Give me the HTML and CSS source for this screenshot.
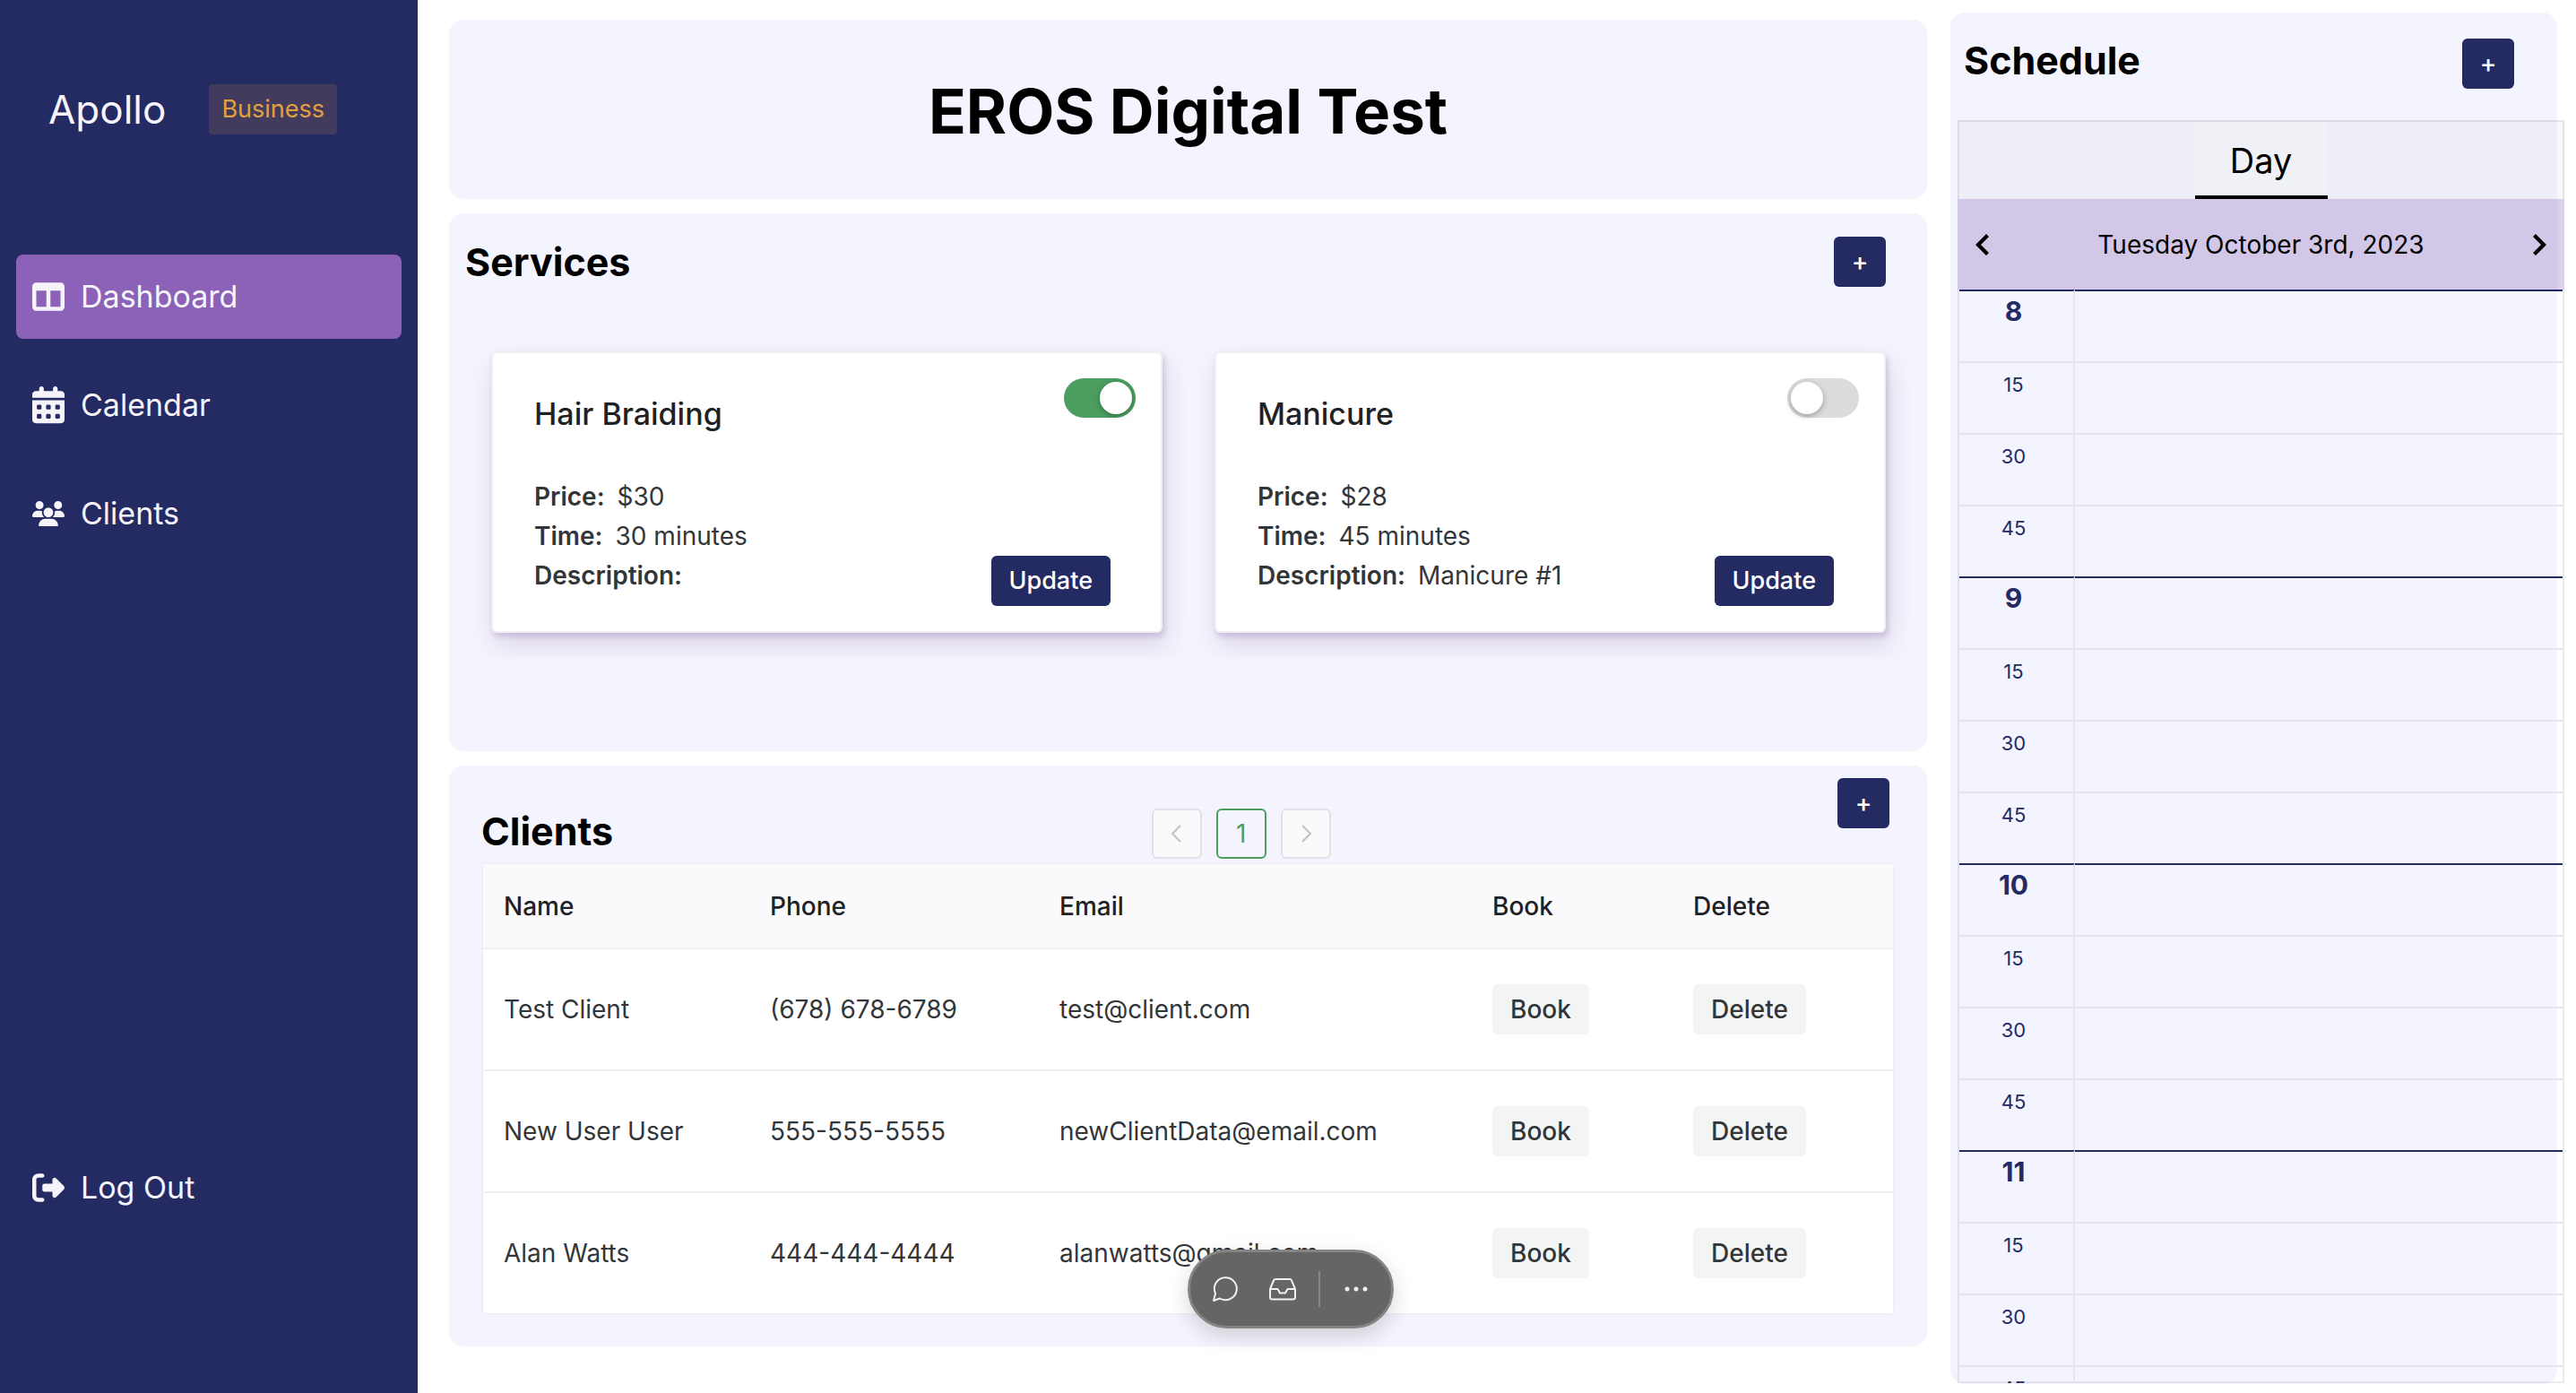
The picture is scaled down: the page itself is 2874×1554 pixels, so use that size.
FILE: index.html
```html
<!DOCTYPE html>
<html lang="en">
<head>
<meta charset="utf-8">
<title>Apollo Dashboard</title>
<link rel="stylesheet" href="styles.css">
</head>
<body>
<div class="app">
  <nav class="sidebar" aria-label="Main">
    <div class="brand">
      <span class="brand-name">Apollo</span>
      <span class="badge">Business</span>
    </div>
    <div class="nav-list">
      <a class="nav-link active" href="#dashboard">
        <svg class="nav-icon" viewBox="0 0 512 512"><path d="M0 96C0 60.7 28.7 32 64 32H448c35.3 0 64 28.7 64 64V416c0 35.3-28.7 64-64 64H64c-35.3 0-64-28.7-64-64V96zm64 64V416H224V160H64zm384 0H288V416H448V160z"/></svg>
        Dashboard
      </a>
      <a class="nav-link" href="#calendar">
        <svg class="nav-icon" viewBox="0 0 448 512"><path d="M128 0c17.700 0 32 14.300 32 32V64H288V32c0-17.700 14.300-32 32-32s32 14.300 32 32V64h48c26.500 0 48 21.500 48 48v48H0V112C0 85.500 21.500 64 48 64H96V32c0-17.700 14.300-32 32-32zM0 192H448V464c0 26.500-21.500 48-48 48H48c-26.500 0-48-21.500-48-48V192zm64 80v32c0 8.800 7.200 16 16 16h32c8.800 0 16-7.200 16-16V272c0-8.800-7.200-16-16-16H80c-8.800 0-16 7.200-16 16zm128 0v32c0 8.800 7.200 16 16 16h32c8.800 0 16-7.200 16-16V272c0-8.800-7.200-16-16-16H208c-8.800 0-16 7.200-16 16zm144-16c-8.800 0-16 7.200-16 16v32c0 8.800 7.200 16 16 16h32c8.800 0 16-7.200 16-16V272c0-8.800-7.200-16-16-16H336zM64 400v32c0 8.800 7.200 16 16 16h32c8.800 0 16-7.200 16-16V400c0-8.800-7.200-16-16-16H80c-8.800 0-16 7.200-16 16zm144-16c-8.800 0-16 7.200-16 16v32c0 8.800 7.200 16 16 16h32c8.800 0 16-7.200 16-16V400c0-8.800-7.200-16-16-16H208zm112 16v32c0 8.800 7.200 16 16 16h32c8.800 0 16-7.200 16-16V400c0-8.800-7.200-16-16-16H336c-8.800 0-16 7.200-16 16z"/></svg>
        Calendar
      </a>
      <a class="nav-link" href="#clients">
        <svg class="nav-icon" viewBox="0 0 640 512"><path d="M144 0a80 80 0 1 1 0 160A80 80 0 1 1 144 0zM512 0a80 80 0 1 1 0 160A80 80 0 1 1 512 0zM0 298.700C0 239.800 47.800 192 106.700 192h42.700c15.900 0 31 3.500 44.600 9.700c-1.300 7.200-1.900 14.700-1.900 22.300c0 38.200 16.800 72.500 43.300 96c-.2 0-.4 0-.7 0H21.300C9.600 320 0 310.400 0 298.700zM405.300 320c-.2 0-.4 0-.7 0c26.600-23.500 43.300-57.800 43.300-96c0-7.600-.7-15-1.900-22.300c13.600-6.300 28.700-9.700 44.600-9.700h42.700C592.200 192 640 239.800 640 298.700c0 11.800-9.600 21.300-21.300 21.300H405.300zM224 224a96 96 0 1 1 192 0 96 96 0 1 1-192 0zM128 485.300C128 411.700 187.700 352 261.300 352H378.700C452.300 352 512 411.700 512 485.300c0 14.700-11.900 26.700-26.700 26.700H154.700c-14.700 0-26.700-11.900-26.700-26.700z"/></svg>
        Clients
      </a>
    </div>
    <a class="nav-link logout" href="#logout">
      <svg class="nav-icon" viewBox="0 0 512 512"><path d="M377.900 105.900L500.700 228.700c7.200 7.200 11.300 17.100 11.300 27.300s-4.100 20.100-11.300 27.300L377.900 406.100c-6.400 6.400-15 9.900-24 9.900c-18.700 0-33.900-15.200-33.900-33.900l0-62.100-128 0c-17.700 0-32-14.300-32-32l0-64c0-17.700 14.300-32 32-32l128 0 0-62.100c0-18.700 15.200-33.900 33.900-33.900c9 0 17.600 3.600 24 9.900zM160 96L96 96c-17.700 0-32 14.300-32 32l0 256c0 17.700 14.300 32 32 32l64 0c17.700 0 32 14.300 32 32s-14.300 32-32 32l-64 0c-53 0-96-43-96-96L0 128C0 75 43 32 96 32l64 0c17.700 0 32 14.300 32 32s-14.300 32-32 32z"/></svg>
      Log Out
    </a>
  </nav>

  <main class="main">
    <header class="card title-card"><h1 class="title">EROS Digital Test</h1></header>

    <section class="card services">
      <div class="services-head">
        <h2 class="heading">Services</h2>
        <button class="btn btn-add" type="button" aria-label="Add service">+</button>
      </div>
      <div class="service-list">
        <article class="service">
          <div class="service-top">
            <h3 class="service-name" id="svc-hair">Hair Braiding</h3>
            <input class="switch" type="checkbox" role="switch" aria-labelledby="svc-hair" checked>
          </div>
          <div class="service-bottom">
            <dl class="facts">
              <div class="fact"><dt>Price:</dt><dd>$30</dd></div>
              <div class="fact"><dt>Time:</dt><dd>30 minutes</dd></div>
              <div class="fact"><dt>Description:</dt><dd></dd></div>
            </dl>
            <button class="btn btn-primary" type="button">Update</button>
          </div>
        </article>
        <article class="service">
          <div class="service-top">
            <h3 class="service-name" id="svc-mani">Manicure</h3>
            <input class="switch" type="checkbox" role="switch" aria-labelledby="svc-mani">
          </div>
          <div class="service-bottom">
            <dl class="facts">
              <div class="fact"><dt>Price:</dt><dd>$28</dd></div>
              <div class="fact"><dt>Time:</dt><dd>45 minutes</dd></div>
              <div class="fact"><dt>Description:</dt><dd>Manicure #1</dd></div>
            </dl>
            <button class="btn btn-primary" type="button">Update</button>
          </div>
        </article>
      </div>
    </section>

    <section class="card clients">
      <div class="clients-head">
        <h2 class="heading">Clients</h2>
        <div class="pager">
          <button class="page-btn" type="button" aria-label="Previous page" disabled><svg class="page-icon" viewBox="0 0 28 28"><path d="M18 5L9 14l9 9"/></svg></button>
          <button class="page-btn current" type="button" aria-current="page">1</button>
          <button class="page-btn" type="button" aria-label="Next page" disabled><svg class="page-icon" viewBox="0 0 28 28"><path d="M10 5l9 9-9 9"/></svg></button>
        </div>
        <button class="btn btn-add" type="button" aria-label="Add client">+</button>
      </div>
      <table class="client-table">
        <colgroup><col class="c-name"><col class="c-phone"><col class="c-email"><col class="c-book"><col class="c-delete"></colgroup>
        <thead>
          <tr><th>Name</th><th>Phone</th><th>Email</th><th>Book</th><th>Delete</th></tr>
        </thead>
        <tbody>
          <tr><td>Test Client</td><td>(678) 678-6789</td><td>test@client.com</td><td><button class="btn btn-soft" type="button">Book</button></td><td><button class="btn btn-soft" type="button">Delete</button></td></tr>
          <tr><td>New User User</td><td>555-555-5555</td><td>newClientData@email.com</td><td><button class="btn btn-soft" type="button">Book</button></td><td><button class="btn btn-soft" type="button">Delete</button></td></tr>
          <tr><td>Alan Watts</td><td>444-444-4444</td><td>alanwatts@gmail.com</td><td><button class="btn btn-soft" type="button">Book</button></td><td><button class="btn btn-soft" type="button">Delete</button></td></tr>
        </tbody>
      </table>
    </section>
  </main>

  <aside class="card schedule">
    <div class="schedule-head">
      <h2 class="heading">Schedule</h2>
      <button class="btn btn-add" type="button" aria-label="Add appointment">+</button>
    </div>
    <div class="planner">
      <div class="tabs"><button class="tab" type="button">Day</button></div>
      <div class="date-bar">
        <button class="arrow" type="button" aria-label="Previous day"><svg class="arrow-icon" viewBox="0 0 16 24"><path d="M13 0l3 3-9 9 9 9-3 3L1 12z"/></svg></button>
        <span>Tuesday October 3rd, 2023</span>
        <button class="arrow" type="button" aria-label="Next day"><svg class="arrow-icon" viewBox="0 0 16 24"><path d="M3 0L0 3l9 9-9 9 3 3 12-12z"/></svg></button>
      </div>
      <div class="hours">
        <table class="slots">
          <tbody>
            <tr class="hour"><th>8</th><td></td></tr>
            <tr><th>15</th><td></td></tr>
            <tr><th>30</th><td></td></tr>
            <tr><th>45</th><td></td></tr>
            <tr class="hour"><th>9</th><td></td></tr>
            <tr><th>15</th><td></td></tr>
            <tr><th>30</th><td></td></tr>
            <tr><th>45</th><td></td></tr>
            <tr class="hour"><th>10</th><td></td></tr>
            <tr><th>15</th><td></td></tr>
            <tr><th>30</th><td></td></tr>
            <tr><th>45</th><td></td></tr>
            <tr class="hour"><th>11</th><td></td></tr>
            <tr><th>15</th><td></td></tr>
            <tr><th>30</th><td></td></tr>
            <tr><th>45</th><td></td></tr>
          </tbody>
        </table>
      </div>
    </div>
  </aside>
</div>

<div class="toolbar" role="toolbar" aria-label="Comments">
  <button class="tool" type="button" aria-label="Comment"><svg class="tool-icon" viewBox="0 0 32 32"><path d="M3 29l2-8A12.500 12.500 0 1 1 10 26.500z"/></svg></button>
  <button class="tool inbox" type="button" aria-label="Inbox"><svg class="tool-icon" viewBox="0 0 32 32"><path d="M2 16L6 6.500Q6.600 5 8.200 5H23.800Q25.400 5 26 6.500L30 16V25Q30 27.500 27.500 27.500H4.500Q2 27.500 2 25zH10.500L13 20.500H19L21.500 16H30"/></svg></button>
  <span class="tool-divider"></span>
  <button class="tool" type="button" aria-label="More"><svg class="tool-icon dots" viewBox="0 0 32 32"><circle cx="6" cy="16" r="2.500"/><circle cx="16" cy="16" r="2.500"/><circle cx="26" cy="16" r="2.500"/></svg></button>
</div>
</body>
</html>
```
FILE: styles.css
```css
* { box-sizing: border-box; }

body {
  margin: 0;
  background: #fff;
  color: #333639;
  font-family: Inter, "Liberation Sans", sans-serif;
  font-size: 28px;
  line-height: 44px;
}

h1, h2, h3, dl, dd { margin: 0; }

button {
  border: 0;
  padding: 0;
  background: none;
  color: inherit;
  font: inherit;
}

svg { display: block; }

.app {
  display: grid;
  grid-template-columns: 466px 1fr 677px;
  height: 100vh;
  padding-right: 21px;
}

/* Sidebar */
.sidebar {
  display: flex;
  flex-direction: column;
  padding: 94px 18px 182px;
  background: #242a62;
  color: #f6f3fa;
}

.brand {
  display: flex;
  align-items: center;
  gap: 48px;
  height: 56px;
  padding-left: 36px;
}

.brand-name { font-size: 44px; }

.badge {
  padding: 6px 14px;
  border-radius: 4px;
  background: #433b5e;
  color: #e2a23b;
  font-size: 27px;
}

.nav-list {
  display: flex;
  flex-direction: column;
  gap: 27px;
  margin-top: 134px;
}

.nav-link {
  display: flex;
  align-items: center;
  gap: 18px;
  height: 94px;
  padding: 0 18px;
  border-radius: 8px;
  color: inherit;
  font-size: 34px;
  text-decoration: none;
}

.nav-link.active { background: #8c61b8; }
.nav-icon { width: 36px; fill: currentColor; }
.logout { margin-top: auto; }

/* Panels */
.card {
  border-radius: 16px;
  background: #f3f4fd;
}

.main {
  display: flex;
  flex-direction: column;
  gap: 16px;
  padding: 22px 26px 0 35px;
}

.heading {
  color: #000;
  font-size: 43px;
  font-weight: 700;
  line-height: 56px;
}

.title-card { padding: 58px 0 54px; }

.title {
  color: #000;
  font-size: 69px;
  font-weight: 700;
  line-height: 88px;
  text-align: center;
}

/* Buttons */
.btn {
  height: 56px;
  border-radius: 6px;
  font-weight: 500;
}

.btn-add { width: 58px; }

.btn-add,
.btn-primary {
  background: #242a62;
  color: #fff;
}

.btn-primary,
.btn-soft { padding: 0 20px; }
.btn-primary { font-size: 27px; }
.btn-soft { background: #f3f5f5; }

/* Services */
.services { height: 600px; }

.services-head {
  display: flex;
  justify-content: space-between;
  padding: 26px 46px 0 18px;
}

.service-list {
  display: grid;
  grid-template-columns: 1fr 1fr;
  gap: 58px;
  margin-top: 44px;
  padding: 28px 46px 28px 47px;
  overflow: hidden;
}

.service {
  display: flex;
  flex-direction: column;
  justify-content: space-between;
  height: 314px;
  padding: 28px;
  border: 2px solid #efeff5;
  border-radius: 6px;
  background: #fff;
  box-shadow: 2px 4px 6px rgba(90, 30, 110, 0.18), 4px 14px 28px rgba(90, 30, 110, 0.14);
}

.service-top {
  display: flex;
  justify-content: space-between;
  padding-left: 18px;
}

.service-name {
  padding-top: 18px;
  color: #1f2225;
  font-size: 34px;
  font-weight: 500;
  line-height: 44px;
}

.service-bottom {
  display: flex;
  align-items: flex-end;
  justify-content: space-between;
  padding: 0 28px 0 18px;
}

.facts { padding-bottom: 12px; }

.fact {
  display: flex;
  gap: 14px;
}

dt { font-weight: 600; }

.switch {
  display: flex;
  align-items: center;
  width: 80px;
  height: 44px;
  margin: 0;
  padding: 4px;
  border-radius: 22px;
  background: #dbdbdb;
  appearance: none;
}

.switch::before {
  width: 36px;
  height: 36px;
  border-radius: 50%;
  background: #fff;
  box-shadow: 0 2px 6px rgba(0, 0, 0, 0.3);
  content: "";
}

.switch:checked {
  justify-content: flex-end;
  background: #4b9e5f;
}

/* Clients */
.clients {
  height: 648px;
  padding: 14px 36px 0;
}

.clients-head {
  display: grid;
  grid-template-columns: 6fr auto 5fr;
  height: 94px;
  padding-right: 6px;
}

.clients-head .heading { padding-top: 31px; }
.clients-head .btn-add { justify-self: end; }

.pager {
  display: flex;
  gap: 16px;
  padding-top: 34px;
}

.page-btn {
  display: grid;
  place-items: center;
  width: 56px;
  height: 56px;
  border: 2px solid #e0e0e6;
  border-radius: 6px;
  background: #fafafc;
}

.page-btn.current {
  border-color: #4b9e5f;
  background: none;
  color: #4b9e5f;
}

.page-icon {
  width: 28px;
  fill: none;
  stroke: #c2c2c2;
  stroke-width: 2;
}

.client-table {
  width: 100%;
  border: 2px solid #efeff5;
  border-radius: 6px;
  background: #fff;
  border-spacing: 0;
  table-layout: fixed;
}

.c-name { width: 297px; }
.c-phone { width: 323px; }
.c-book { width: 224px; }
.c-delete { width: 246px; }

.client-table th,
.client-table td {
  padding: 0 23px;
  border-bottom: 2px solid #efeff5;
  text-align: left;
}

.client-table th {
  height: 95px;
  background: #fafafc;
  color: #1f2225;
  font-weight: 500;
}

.client-table td { height: 136px; }

.client-table tbody tr:last-child td {
  height: 134px;
  border-bottom: 0;
}

/* Schedule */
.schedule {
  display: flex;
  flex-direction: column;
  min-height: 0;
  margin: 14px 0 10px;
  padding: 0 0 1px 8px;
}

.schedule-head {
  display: flex;
  align-items: flex-start;
  justify-content: space-between;
  height: 120px;
  padding: 25px 48px 0 7px;
}

.schedule-head .btn-add { margin-top: 4px; }

/* The planner keeps the panel's full width and hangs past its right edge */
.planner {
  display: flex;
  flex: 1;
  flex-direction: column;
  min-height: 0;
  margin-right: -8px;
  color: #000;
}

.tabs {
  display: flex;
  flex-shrink: 0;
  justify-content: center;
  height: 88px;
  border: 2px solid rgba(0, 0, 0, 0.08);
  border-bottom: 0;
  background: rgba(200, 200, 200, 0.12);
}

.tab {
  width: 148px;
  padding-top: 4px;
  border-bottom: 4px solid #000;
  background: rgba(255, 255, 255, 0.2);
  font-size: 38px;
}

.date-bar {
  display: flex;
  flex-shrink: 0;
  align-items: center;
  justify-content: space-between;
  height: 101px;
  padding: 0 19px;
  background: rgba(140, 97, 184, 0.3);
}

.arrow-icon {
  width: 16px;
  fill: #000;
}

.hours {
  flex: 1;
  min-height: 0;
  border: solid rgba(0, 0, 0, 0.08);
  border-width: 0 2px;
  box-shadow: inset 0 -2px 0 rgba(0, 0, 0, 0.08);
  overflow: hidden;
}

.slots {
  width: 100%;
  border-spacing: 0;
  table-layout: fixed;
}

.slots th,
.slots td {
  height: 80px;
  padding: 0;
  border-top: 2px solid #e5e5ea;
  vertical-align: top;
}

.slots th {
  width: 129px;
  padding: 2px 6px 0 0;
  border-right: 2px solid #e5e5ea;
  color: #242a62;
  font-size: 22px;
  font-weight: 400;
}

.slots .hour th {
  padding-top: 0;
  font-size: 30px;
  font-weight: 700;
}

.slots .hour th,
.slots .hour td { border-top-color: #242a62; }

/* Floating toolbar */
.toolbar {
  position: fixed;
  bottom: 72px;
  left: 1325px;
  display: flex;
  align-items: center;
  gap: 24px;
  height: 88px;
  padding: 0 23px;
  border: 3px solid #848484;
  border-radius: 44px;
  background: #656565;
  box-shadow: 0 8px 24px rgba(0, 0, 0, 0.16);
}

.inbox { margin-left: 8px; }

.tool-icon {
  width: 32px;
  fill: none;
  stroke: #f0f0f0;
  stroke-linejoin: round;
  stroke-width: 2;
}

.tool-icon.dots {
  fill: #f0f0f0;
  stroke: none;
}

.tool-divider {
  width: 2px;
  height: 40px;
  background: #848484;
}
```
